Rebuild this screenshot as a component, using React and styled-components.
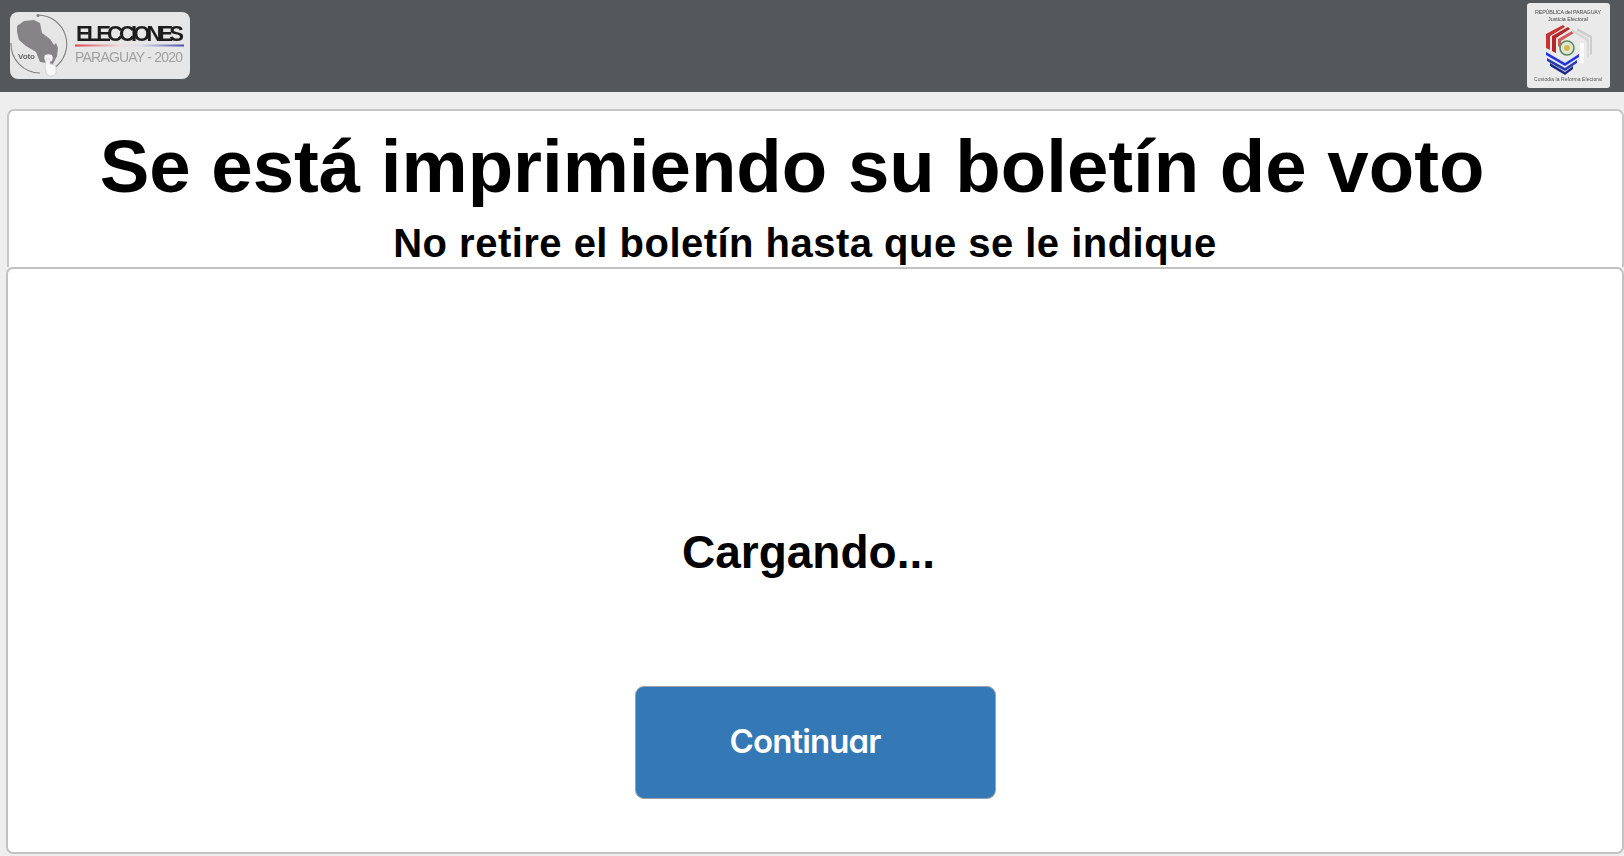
import React from 'react';
import styled, { createGlobalStyle } from 'styled-components';

const GlobalStyle = createGlobalStyle`
  html, body {
    margin: 0;
    padding: 0;
    height: 100%;
    overflow: hidden;
    background: #eeeeee;
    font-family: "Liberation Sans", Arial, sans-serif;
  }
`;

const Page = styled.div`
  width: 1624px;
  height: 856px;
  display: flex;
  flex-direction: column;
`;

const Header = styled.header`
  height: 92px;
  flex: none;
  background: #54585a;
  display: flex;
  justify-content: space-between;
  padding: 3px 14px 0 10px;
  box-sizing: border-box;
`;

const LogoBadge = styled.div`
  width: 180px;
  height: 67px;
  margin-top: 9px;
  background: #e6e6e6;
  border-radius: 8px;
  overflow: hidden;
`;

const SealBadge = styled.div`
  width: 83px;
  height: 85px;
  background: #eaeaea;
  border-radius: 3px;
  overflow: hidden;
`;

const Main = styled.main`
  flex: 1;
  display: flex;
  flex-direction: column;
  padding: 17px 0 2px 6px;
  min-height: 0;
`;

const TitleCard = styled.section`
  height: 158px;
  flex: none;
  margin-left: 1px;
  box-sizing: border-box;
  background: #fff;
  border: 2px solid #c6c6c6;
  border-bottom: 0;
  border-radius: 7px 7px 0 0;
  text-align: center;
  color: #000;
`;

const Title = styled.h1`
  margin: 15px 0 0 -47px;
  font-size: 74.4px;
  line-height: 82px;
  font-weight: 700;
  white-space: nowrap;
`;

const Subtitle = styled.h2`
  margin: 12px 0 0 -21px;
  font-size: 40px;
  line-height: 46px;
  font-weight: 700;
  letter-spacing: 0.48px;
  white-space: nowrap;
`;

const ContentCard = styled.section`
  flex: 1;
  box-sizing: border-box;
  background: #fff;
  border: 2px solid #c2c2c2;
  border-radius: 7px;
  display: flex;
  flex-direction: column;
  align-items: center;
`;

const Loading = styled.p`
  margin: 258px 0 0 -13px;
  font-size: 46px;
  line-height: 50px;
  font-weight: 700;
  color: #000;
`;

const ContinueButton = styled.button`
  width: 361px;
  height: 113px;
  margin: 109px 0 0 0;
  box-sizing: border-box;
  padding: 0 20px 4px 0;
  border: 1px solid #98a2ac;
  border-radius: 9px;
  background: #3478b5;
  color: #fff;
  font-family: Inter, Lato, sans-serif;
  font-feature-settings: "cv11" 1;
  font-size: 33px;
  font-weight: 600;
  letter-spacing: -0.9px;
  cursor: pointer;
`;

const EleccionesLogo = () => (
  <svg width="180" height="67" viewBox="0 0 180 67">
    <defs>
      <filter id="soft">
        <feGaussianBlur stdDeviation="0.6" />
      </filter>
      <linearGradient id="rule" x1="0" x2="1" y1="0" y2="0">
        <stop offset="0" stopColor="#d9434b" />
        <stop offset="0.4" stopColor="#f0d8da" />
        <stop offset="0.6" stopColor="#dcdcec" />
        <stop offset="1" stopColor="#4a4fa8" />
      </linearGradient>
    </defs>
    <g filter="url(#soft)">
      <path d="M28 3 A 29 29 0 0 1 44 56 M30 61 A 29 29 0 0 1 1 31" fill="none" stroke="#808080" strokeWidth="1.1" />
      <circle cx="28" cy="3.5" r="1.6" fill="#808080" />
      <path d="M7 20 L7 14 L14 9 L24 8 L30 11 L32 21 L40 27 L44 33 L46 31 L48 36 L47 44 L43 52 L37 51 L30 50 L26 40 L16 34 L9 28 Z" fill="#868486" />
      <text x="8" y="47" fontFamily="Liberation Sans" fontSize="8" fontWeight="700" fill="#666" textLength="17">Voto</text>
      <rect x="34" y="42" width="9" height="8" rx="3" fill="#f4f4f4" stroke="#8a8a8a" strokeWidth="0.8" />
      <path d="M36 47 h3 q1 0 1 1 v4 l4 1 q2 0 2 2 v6 q-2 4 -7 3 q-2 -1 -3 -4 l-1 -5 z" fill="#f8f8f8" stroke="#c4c4c4" strokeWidth="0.6" />
      <text x="66" y="29" fontFamily="Liberation Sans" fontSize="22" fontWeight="700" fill="#1c1c1c" textLength="108" lengthAdjust="spacing">ELECCIONES</text>
      <rect x="65" y="32.5" width="109" height="2" fill="url(#rule)" />
      <text x="65" y="50" fontFamily="Liberation Sans" fontSize="14" fill="#a0a0a0" textLength="108" lengthAdjust="spacing">PARAGUAY - 2020</text>
    </g>
  </svg>
);

const TribunalSeal = () => (
  <svg width="83" height="85" viewBox="0 0 83 85">
    <defs>
      <filter id="soft2">
        <feGaussianBlur stdDeviation="0.5" />
      </filter>
    </defs>
    <g filter="url(#soft2)">
      <text x="41" y="11" textAnchor="middle" fontFamily="Liberation Sans" fontSize="5.4" fill="#444" textLength="66">REPÚBLICA del PARAGUAY</text>
      <text x="41" y="18" textAnchor="middle" fontFamily="Liberation Sans" fontSize="5.4" fill="#444" textLength="40">Justicia Electoral</text>
      <path d="M19 31 L36 22 L38 24 L23 33 L23 47 L19 45 Z" fill="#c9312d" />
      <path d="M25 33 L41 24 L43 26 L29 35 L29 50 L25 48 Z" fill="#b5282a" />
      <path d="M31 36 L45 28 L47 30 L34 38 L34 45 L31 43 Z" fill="#d25a54" />
      <path d="M45 26 L62 36 L62 54 L60 55 L60 38 L45 29 Z" fill="#d8d8d8" />
      <path d="M50 25 L65 33 L65 51 L63 52 L63 35 L50 28 Z" fill="#cdcdcd" />
      <rect x="53" y="40" width="4" height="20" fill="#ffffff" />
      <path d="M19 49 L38 60 L52 51 L52 54 L38 63 L19 52 Z" fill="#2233e0" />
      <path d="M20 55 L38 65 L50 57 L50 60 L38 68 L20 58 Z" fill="#2a3ab0" />
      <path d="M23 60 L38 69 L46 63 L46 66 L38 72 L23 63 Z" fill="#1f2c8a" />
      <circle cx="40" cy="45" r="7" fill="#e2e6d6" stroke="#5a8a5a" strokeWidth="1.6" />
      <circle cx="40" cy="45" r="3" fill="#d9b84a" />
      <text x="41" y="78" textAnchor="middle" fontFamily="Liberation Sans" fontSize="5" fill="#555" textLength="68">Custodia la Reforma Electoral</text>
    </g>
  </svg>
);

export default function App() {
  return (
    <>
      <GlobalStyle />
      <Page>
        <Header>
          <LogoBadge>
            <EleccionesLogo />
          </LogoBadge>
          <SealBadge>
            <TribunalSeal />
          </SealBadge>
        </Header>
        <Main>
          <TitleCard>
            <Title>Se está imprimiendo su boletín de voto</Title>
            <Subtitle>No retire el boletín hasta que se le indique</Subtitle>
          </TitleCard>
          <ContentCard>
            <Loading>Cargando...</Loading>
            <ContinueButton>Continuar</ContinueButton>
          </ContentCard>
        </Main>
      </Page>
    </>
  );
}
